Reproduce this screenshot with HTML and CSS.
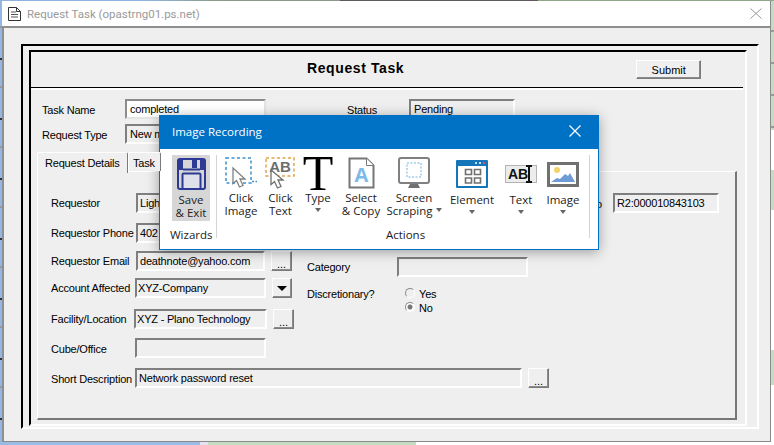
FILE: index.html
```html
<!DOCTYPE html>
<html lang="en">
<head>
<meta charset="utf-8">
<title>Request Task</title>
<link rel="stylesheet" href="styles.css">
</head>
<body>
<div class="window">
  <div class="titlebar">
    <svg class="doc-icon" width="13" height="14" viewBox="0 0 13 14"><path d="M.5.5h8l4 4v9H.5z" fill="#fff" stroke="#333"/><path d="M8.5.5v4h4" fill="none" stroke="#333"/><path d="M3 5h5M3 7.500h7M3 10h7" stroke="#555"/></svg>
    <span class="window-title">Request Task (opastrng01.ps.net)</span>
    <svg class="window-close" width="12" height="11" viewBox="0 0 12 11"><path d="M.5.500l11 10M11.500.500l-11 10" stroke="#999" fill="none"/></svg>
  </div>
  <div class="client">
    <div class="frame-outer">
      <div class="frame-inner">
        <header class="form-head">
          <h1 class="form-title">Request Task</h1>
          <button class="btn btn-submit">Submit</button>
        </header>
        <div class="top-row">
          <label class="lbl lbl-top">Task Name</label>
          <div class="field field-white field-task">completed</div>
          <label class="lbl lbl-status">Status</label>
          <div class="field field-status">Pending</div>
        </div>
        <div class="top-row top-row-2">
          <label class="lbl lbl-top">Request Type</label>
          <div class="field field-task">New m</div>
        </div>
        <div class="tabs">
          <div class="tab tab-active">Request Details</div>
          <div class="tab">Task</div>
        </div>
        <div class="panel">
          <div class="panel-cols">
            <div class="col-left">
              <div class="row"><label class="lbl lbl-flat lbl-left">Requestor</label><div class="field f-left">Light</div></div>
              <div class="row row-phone"><label class="lbl lbl-flat lbl-left">Requestor Phone</label><div class="field f-left">402</div></div>
              <div class="row row-email"><label class="lbl lbl-flat lbl-left">Requestor Email</label><div class="field f-left f-email">deathnote@yahoo.com</div><button class="btn btn-dots">...</button></div>
              <div class="row row-account"><label class="lbl lbl-flat lbl-left lbl-account">Account Affected</label><div class="field f-account f-tight">XYZ-Company</div><button class="btn btn-drop"><span class="drop-arrow"></span></button></div>
              <div class="row row-facility"><label class="lbl lbl-flat lbl-left lbl-facility">Facility/Location</label><div class="field f-facility f-tight">XYZ - Plano Technology</div><button class="btn btn-dots">...</button></div>
              <div class="row row-cube"><label class="lbl lbl-left lbl-account">Cube/Office</label><div class="field f-account"></div></div>
            </div>
            <div class="col-mid">
              <div class="row"><label class="lbl lbl-flat lbl-mid">Category</label><div class="field f-account"></div></div>
              <div class="disc-row">
                <label class="lbl lbl-mid">Discretionary?</label>
                <div class="radios">
                  <div class="radio-row"><span class="radio"></span><span class="lbl">Yes</span></div>
                  <div class="radio-row"><span class="radio radio-on"></span><span class="lbl">No</span></div>
                </div>
              </div>
            </div>
            <div class="col-right">
              <label class="lbl lbl-ref">Ref No</label>
              <div class="field f-ref">R2:000010843103</div>
            </div>
          </div>
          <div class="row row-short"><label class="lbl lbl-left lbl-account">Short Description</label><div class="field f-short">Network password reset</div><button class="btn btn-dots">...</button></div>
        </div>
      </div>
    </div>
  </div>
</div>

<section class="popup">
  <div class="popup-head">
    <span>Image Recording</span>
    <svg width="12" height="12" viewBox="0 0 12 12"><path d="M.5.500l11 11M11.500.500l-11 11" stroke="#fff" stroke-width="1.200" fill="none"/></svg>
  </div>
  <div class="ribbon">
    <div class="group group-wiz">
      <div class="group-items">
        <div class="rb rb-save">
          <svg class="save-icon" width="29" height="32" viewBox="0 0 29 32"><path d="M3 1h23a2 2 0 0 1 2 2v26a2 2 0 0 1-2 2H3a2 2 0 0 1-2-2V3a2 2 0 0 1 2-2z" fill="#d6d6d6" stroke="#2c3a96" stroke-width="2"/><rect x="15" y="2" width="5" height="8" fill="#2c3a96"/><path d="M5.500 30V16.500a1 1 0 0 1 1-1h16a1 1 0 0 1 1 1V30" fill="#dfe1ea" stroke="#2c3a96" stroke-width="2"/><path d="M6 11.500h17" stroke="#2c3a96" stroke-width="2"/><path d="M2 12h4V2H2zM23 12h4V2h-4z" fill="#2c3a96"/></svg>
          <span class="rb-text rb-text-save">Save<br>&amp; Exit</span>
        </div>
      </div>
      <div class="group-label">Wizards</div>
    </div>
    <div class="group group-act">
      <div class="group-items">
        <div class="rb w-ci">
          <span class="rb-icon"><svg width="33" height="32" viewBox="0 0 33 32"><rect x="1" y="1" width="25" height="25" fill="none" stroke="#3a93cc" stroke-width="1.500" stroke-dasharray="3 2.500"/><path d="M27 24.500h5" stroke="#3a93cc" stroke-width="1.500" stroke-dasharray="2 1.500"/><path d="M8 11v15.500l3.500-3 3 6.500 3.500-1.500-3-6.500h5z" fill="#fff" stroke="#808080" stroke-width="1.300"/></svg></span>
          <span class="rb-text">Click<br>Image</span>
        </div>
        <div class="rb w-ct">
          <span class="rb-icon"><svg width="31" height="32" viewBox="0 0 31 32"><rect x="1" y="1" width="28" height="18" fill="none" stroke="#e3a245" stroke-width="1.500" stroke-dasharray="3 2.500"/><text x="15" y="15" text-anchor="middle" class="svg-ab">AB</text><path d="M6 13v14.500l3.500-3 3 6.500 3.500-1.500-3-6.500h5z" fill="#fff" stroke="#707070" stroke-width="1.300"/></svg></span>
          <span class="rb-text">Click<br>Text</span>
        </div>
        <div class="rb w-ty">
          <span class="rb-icon"><svg class="svg-open" width="32" height="34" viewBox="0 0 32 34"><text x="16" y="33" text-anchor="middle" class="svg-t">T</text></svg></span>
          <span class="rb-text">Type</span>
          <span class="caret caret-stack"></span>
        </div>
        <div class="rb w-sc">
          <span class="rb-icon"><svg width="27" height="32" viewBox="0 0 27 32"><path d="M1.500 1.500h17l7 7v22h-24z" fill="#fff" stroke="#767676" stroke-width="2"/><path d="M18.500 1.500v7h7" fill="#fff" stroke="#767676"/><text x="13.500" y="25" text-anchor="middle" class="svg-a">A</text></svg></span>
          <span class="rb-text">Select<br>&amp; Copy</span>
        </div>
        <div class="rb w-ss">
          <span class="rb-icon"><svg width="32" height="32" viewBox="0 0 32 32"><rect x="1" y="1" width="30" height="25" rx="2" fill="#fff" stroke="#808080" stroke-width="2"/><rect x="9" y="6" width="14" height="14" fill="none" stroke="#6fb1dd" stroke-dasharray="2 1.500"/><path d="M12 27h8l2 4H10z" fill="#707070"/></svg></span>
          <span class="rb-text">Screen<br>Scraping<span class="caret caret-inline"></span></span>
        </div>
        <div class="rb w-el">
          <span class="rb-icon rb-icon-low"><svg width="32" height="28" viewBox="0 0 32 28"><rect width="32" height="28" rx="1" fill="#1476b8"/><rect x="2" y="6" width="28" height="20" fill="#fff"/><circle cx="20" cy="3" r="1" fill="#fff"/><circle cx="24" cy="3" r="1" fill="#fff"/><circle cx="28" cy="3" r="1" fill="#ef5a6b"/><path d="M9.500 9.500h6v5h-6zM18.500 9.500h6v5h-6zM9.500 18h6v5h-6zM18.500 18h6v5h-6z" fill="none" stroke="#707070" stroke-width="1.600"/></svg></span>
          <span class="rb-text rb-text-low">Element</span>
          <span class="caret caret-stack"></span>
        </div>
        <div class="rb w-tx">
          <span class="rb-icon rb-icon-low"><svg width="32" height="28" viewBox="0 0 32 28"><rect x="0.500" y="5.500" width="31" height="17" fill="#ececec" stroke="#b4b4b4"/><text x="3" y="19" class="svg-abi">AB</text><path d="M21 6h6M21 22h6M24 6v16" stroke="#111" stroke-width="2" fill="none"/></svg></span>
          <span class="rb-text rb-text-low">Text</span>
          <span class="caret caret-stack"></span>
        </div>
        <div class="rb w-im">
          <span class="rb-icon rb-icon-low"><svg width="32" height="28" viewBox="0 0 32 28"><rect x="1.500" y="3.500" width="29" height="22" fill="#fff" stroke="#707070" stroke-width="3"/><circle cx="10" cy="10" r="3" fill="#f2d36b"/><path d="M4 22l6-4 3 1 5-5 3 2 2-3 5 9z" fill="#6c9bd6"/></svg></span>
          <span class="rb-text rb-text-low">Image</span>
          <span class="caret caret-stack"></span>
        </div>
      </div>
      <div class="group-label">Actions</div>
    </div>
  </div>
</section>
</body>
</html>
```
FILE: styles.css
```css
* { box-sizing: border-box; }
html, body { margin: 0; padding: 0; }
body {
  width: 774px;
  height: 445px;
  overflow: hidden;
  position: relative;
  font-family: "Liberation Sans", Arial, sans-serif;
  background-color: #fff;
  background-image:
    linear-gradient(#98bce6, #98bce6),
    linear-gradient(#e4e4ee, #e4e4ee),
    linear-gradient(#c4dcc2, #c4dcc2),
    linear-gradient(90deg, #8fb3dc 0 150px, #8a9a85 220px 340px, #5e5a5e 340px 538px, #8fa688 538px),
    repeating-linear-gradient(transparent 0 30px, #999 30px 32px),
    linear-gradient(#c4dcc2 0 130px, #fff 130px 170px, #c4dcc2 170px 210px, #fff 210px 350px, #c4dcc2 350px 385px, #fff 385px),
    repeating-linear-gradient(#93b7e0 0 26px, #999 26px 28px, #93b7e0 28px 58px, #333 58px 60px);
  background-size: 200px 3px, 8px 3px, 208px 3px, 774px 1px, 3px 130px, 3px 445px, 3px 445px;
  background-position: 0 442px, 200px 442px, 208px 442px, 0 0, 771px 0, 771px 0, 0 0;
  background-repeat: no-repeat;
}

/* Window */
.window {
  width: 769px;
  height: 441px;
  margin: 1px 0 0 2px;
  background: #efefef;
  border-right: 1px solid #8a8a8a;
  border-bottom: 1px solid #8a8a8a;
  display: flex;
  flex-direction: column;
}
.titlebar {
  height: 25px;
  flex: none;
  background: #fff;
  display: flex;
  align-items: center;
  padding: 0 8px 0 6px;
}
.doc-icon { flex: none; }
.window-title {
  margin-left: 6px;
  font: 11.500px Roboto, "Open Sans", sans-serif;
  color: #9a9a9a;
  white-space: nowrap;
}
.window-close { margin-left: auto; }
.client {
  flex: 1;
  border-top: 2px solid #8f8f8f;
  border-left: 2px solid #8f8f8f;
  padding: 16px 0 0 17px;
}

.frame-outer {
  width: 738px;
  height: 385px;
  border-top: 2px solid #000;
  border-left: 2px solid #000;
  border-right: 2px solid #fff;
  border-bottom: 2px solid #fff;
  padding: 4px 10px 0 6px;
}
.frame-inner {
  height: 376px;
  border-top: 2px solid #000;
  border-left: 2px solid #000;
  border-right: 2px solid #fff;
  border-bottom: 2px solid #fff;
}
.form-head {
  height: 36px;
  display: flex;
  align-items: flex-start;
  border-bottom: 1px solid #000;
  box-shadow: 0 2px 0 #fff;
  margin-right: 2px;
}
.form-title {
  margin: 8px 0 0 276px;
  font-size: 14px;
  line-height: 17px;
  font-weight: bold;
  letter-spacing: .6px;
  white-space: nowrap;
}
.btn {
  font: 11px "Liberation Sans", Arial, sans-serif;
  color: #000;
  background: #efefef;
  border: 1px solid;
  border-color: #fff #7a7a7a #7a7a7a #fff;
  box-shadow: inset -1px -1px 0 #8a8a8a;
  padding: 0;
  display: flex;
  align-items: center;
  justify-content: center;
}
.btn-submit { width: 65px; height: 19px; margin: 8px 0 0 232px; }

.lbl {
  font-size: 11px;
  line-height: 14px;
  letter-spacing: -.2px;
  color: #000;
  white-space: nowrap;
  padding-top: 2px;
}
.lbl-flat { padding-top: 0; }
.field {
  height: 20px;
  flex: none;
  overflow: hidden;
  font-size: 11px;
  line-height: 17px;
  letter-spacing: -.2px;
  white-space: nowrap;
  padding-left: 3px;
  background: #efefef;
  border: 2px solid;
  border-color: #7f7f7f #fff #fff #7f7f7f;
}
.field-white { background: #fff; border-color: #8c8c8c #e4e4e4 #e4e4e4 #8c8c8c; }

.top-row { display: flex; align-items: center; margin: 11px 0 0 11px; }
.top-row-2 { margin-top: 5px; }
.lbl-top { width: 83px; flex: none; }
.field-task { width: 141px; }
.lbl-status { margin-left: 81px; width: 62px; flex: none; }
.field-status { width: 106px; }

.tabs { display: flex; margin: 8px 0 0 6px; height: 20px; position: relative; z-index: 1; }
.tab {
  font-size: 11px;
  line-height: 21px;
  letter-spacing: -.2px;
  white-space: nowrap;
  height: 19px;
  padding: 0 5px 0 4px;
  background: #efefef;
  border-top: 1px solid #fff;
  border-left: 1px solid #fff;
  border-right: 1px solid #7a7a7a;
  border-radius: 2px 2px 0 0;
}
.tab-active { width: 91px; height: 21px; padding-left: 7px; }
.panel {
  width: 700px;
  height: 249px;
  margin: -1px 0 0 6px;
  border: 1px solid #fff;
  border-right: 2px solid #777;
  border-bottom: 2px solid #777;
  padding: 21px 0 0 13px;
}
.panel-cols { display: flex; height: 165px; }
.col-left { width: 256px; flex: none; }
.row { display: flex; align-items: center; height: 20px; }
.row-phone { margin-top: 10px; }
.row-email { margin-top: 8px; }
.row-account { margin-top: 7px; }
.row-facility { margin-top: 11px; }
.row-cube { margin-top: 9px; }
.row-short { margin-top: 10px; }
.lbl-left { width: 85px; flex: none; }
.lbl-account { width: 84px; }
.lbl-facility { width: 83px; }
.f-left { width: 131px; padding-left: 2px; }
.f-email { width: 129px; }
.f-account { width: 131px; }
.f-facility { width: 133px; }
.f-tight { padding-left: 1px; }
.f-short { width: 387px; padding-left: 2px; }
.f-email, .f-facility, .f-short { margin-right: 6px; }
.f-account + .btn { margin-left: 6px; }
.btn-dots { width: 21px; height: 20px; padding-top: 6px; }
.btn-drop { width: 20px; height: 20px; }
.drop-arrow { width: 0; height: 0; border: 5px solid transparent; border-top: 5px solid #000; border-bottom: 0; }

.col-mid { width: 220px; flex: none; padding-top: 64px; }
.lbl-mid { width: 90px; flex: none; }
.disc-row { display: flex; margin-top: 8px; }
.radios { margin-left: 8px; margin-top: 1px; }
.radio-row { display: flex; align-items: center; height: 14px; }
.radio {
  width: 10px; height: 10px; flex: none; margin-right: 4px;
  border-radius: 50%;
  background: #efefef;
  border: 1px solid #8a8a8a;
  border-right-color: #fff;
  border-bottom-color: #fff;
}
.radio-on { background: radial-gradient(circle, #777 0 2px, #fff 3px); }
.col-right { flex: 1; display: flex; align-items: flex-start; justify-content: flex-end; }
.lbl-ref { line-height: 18px; margin-right: 11px; }
.f-ref { width: 106px; margin-right: 16px; padding-left: 2px; }

/* Popup */
.popup {
  position: absolute;
  left: 159px;
  top: 115px;
  width: 440px;
  height: 135px;
  background: #fff;
  border: 1px solid #0072c6;
  border-top: 0;
  box-shadow: 0 2px 12px rgba(0,0,0,.35);
  font-family: "Open Sans", sans-serif;
  color: #222;
}
.popup-head {
  height: 34px;
  margin: 0 -1px;
  background: #0072c6;
  color: #fff;
  font-size: 11.500px;
  display: flex;
  align-items: center;
  justify-content: space-between;
  padding: 0 18px 2px 13px;
}
.ribbon { display: flex; padding-top: 6px; height: 100px; }
.group {
  display: flex;
  flex-direction: column;
  height: 87px;
  background: linear-gradient(#d4d4d4, #d4d4d4) right top / 1px 83px no-repeat;
}
.group-wiz { width: 57px; padding-left: 12px; }
.group-act { width: 373px; padding-left: 4px; }
.group-items { display: flex; height: 72px; flex: none; }
.group-label { font-size: 11.500px; line-height: 14px; text-align: center; margin-top: 1px; flex: none; }
.group-wiz .group-label { width: 40px; margin-left: -2px; }
.rb { display: flex; flex-direction: column; align-items: center; font-size: 11.500px; flex: none; }
.rb-save { width: 38px; height: 66px; background: #d6d6d6; padding-top: 3px; }
.save-icon { display: block; flex: none; }
.rb-icon { height: 34px; display: flex; align-items: flex-start; padding-top: 2px; flex: none; }
.rb-icon-low { padding-top: 5px; }
.rb-text { line-height: 13px; text-align: center; margin-top: 2px; white-space: nowrap; }
.rb-text-save { margin-top: 3px; }
.rb-text-low { margin-top: 4px; }
.w-ci { width: 40px; }
.w-ct { width: 39px; }
.w-ty { width: 36px; }
.w-sc { width: 50px; }
.w-ss { width: 56px; }
.w-el { width: 60px; }
.w-tx { width: 38px; }
.w-im { width: 46px; }
.caret { display: inline-block; width: 0; height: 0; border: 3.500px solid transparent; border-top: 4px solid #666; border-bottom: 0; }
.caret-stack { margin-top: 4px; }
.caret-inline { margin-left: 3px; vertical-align: 3px; }
.svg-open { overflow: visible; }
.svg-ab { font: bold 15px "Liberation Sans", sans-serif; fill: #6d6d6d; }
.svg-t { font: 50px "Liberation Serif", serif; fill: #000; }
.svg-a { font: bold 20px "Open Sans", sans-serif; fill: #7cbbe8; }
.svg-abi { font: bold 14px "Liberation Sans", sans-serif; fill: #111; }
```
